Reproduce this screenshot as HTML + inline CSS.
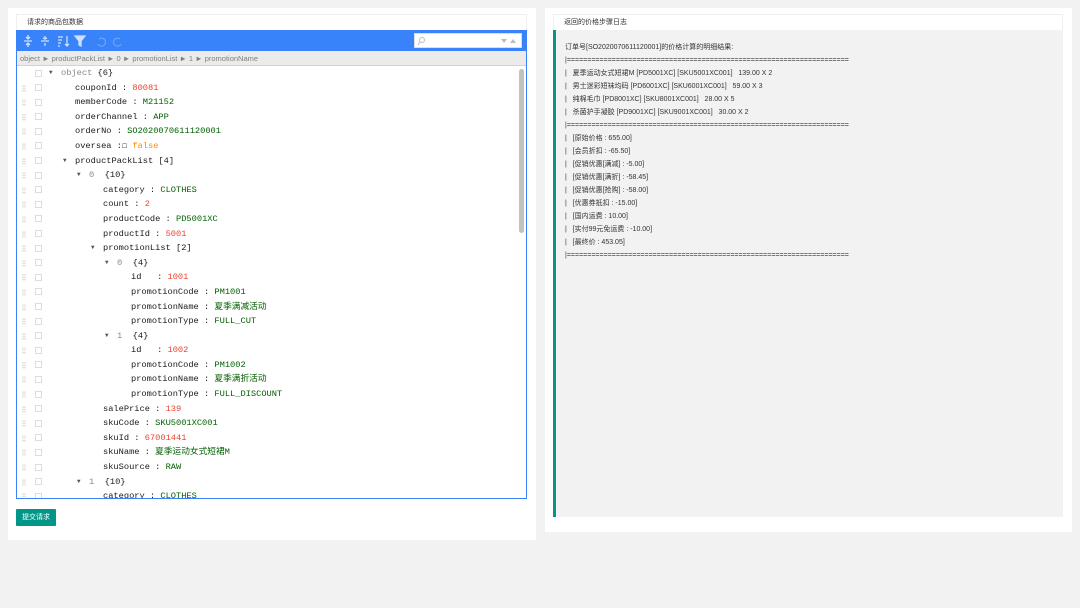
<!DOCTYPE html>
<html><head><meta charset="utf-8"><style>
*{margin:0;padding:0;box-sizing:border-box}
body{width:1080px;height:608px;background:#f2f2f2;font-family:"Liberation Sans","Noto Sans CJK SC",sans-serif;position:relative;overflow:hidden}
.card{position:absolute;background:#fff}
.hd{position:absolute;border:1px solid #eee;border-bottom:none;background:#fff;font-size:7px;color:#333;padding-left:10px;line-height:15px}
.ed{position:absolute;left:16px;top:30px;width:511px;height:469px;border:1px solid #3883fa;overflow:hidden;background:#fff}
.tb{height:20px;background:#3883fa;position:relative}
.bc{height:15px;background:#ebebeb;border-bottom:1px solid #d3d3d3;font-size:7.5px;color:#808080;line-height:15px;padding-left:3px}
.rows{position:relative;font-family:"Liberation Mono","Noto Sans CJK SC",monospace;font-size:8.7px;color:#1a1a1a}
.r{height:14.6px;line-height:14.6px;position:relative;white-space:nowrap}
.r .h{position:absolute;left:5px;top:4px;width:4px;height:7px;background:radial-gradient(circle,#ccc 0.6px,transparent 0.8px) 0 0/2px 2.3px}
.r .c{position:absolute;left:18px;top:3.5px;width:7px;height:7px;border:1px solid #ddd}
.r span.k{position:absolute}
.ar{position:absolute;font-size:6px;color:#555}
.n{color:#ee422e}.s{color:#006000}.b{color:#ff8c00}.g{color:#888}
.sb{position:absolute;right:2px;top:38px;width:5px;height:164px;background:#c1c1c1;border-radius:3px}
.log{position:absolute;left:553px;top:30px;width:510px;height:487px;background:#f2f2f2;border-left:3px solid #009688;font-size:7px;color:#333;padding:11px 0 0 9px}
.log div{height:13px;line-height:13px;white-space:nowrap}
.btn{position:absolute;left:16px;top:509px;width:40px;height:17px;background:#009688;color:#fff;font-size:7px;line-height:17px;text-align:center;border-radius:1px}
</style></head><body>
<div class="card" style="left:8px;top:8px;width:528px;height:532px"></div>
<div class="card" style="left:545px;top:8px;width:527px;height:524px"></div>
<div class="hd" style="left:16px;top:14px;width:511px;height:16px">请求的商品包数据</div>
<div class="hd" style="left:553px;top:14px;width:510px;height:16px">返回的价格步骤日志</div>
<div class="ed">
<div class="tb">
<svg width="110" height="20" style="position:absolute;left:0;top:0" fill="none" stroke="#cfe0fd" stroke-width="1.3">
<path d="M7 10h8M11 4v4M9 6l2 2 2-2M11 16v-4M9 14l2-2 2 2"/>
<path d="M24 10h8M28 5v3M28 15v-3M26 7l2 1 2-1"/>
<path d="M41 6h5M41 9h4M41 12h3M41 15h2M50 5v10M48 13l2 2 2-2"/>
<path d="M58 5h10l-4 5v5l-2-1v-4z" fill="#cfe0fd"/>
<path d="M82 8a4 4 0 1 1-1 5" stroke="#6aa3fb"/><path d="M103 8a4 4 0 1 0 1 5" stroke="#6aa3fb"/>
</svg>
<div style="position:absolute;right:4px;top:2px;width:108px;height:15px;background:#fff;border:1px solid #ddd">
<svg width="108" height="14" style="position:absolute;left:0;top:0"><circle cx="7" cy="6" r="2.5" fill="none" stroke="#bbb"/><path d="M5 8l-2 3" stroke="#bbb"/><path d="M86 5h6l-3 4z M95 9h6l-3-4z" fill="#bbb"/></svg>
</div>
</div>
<div class="bc">object ► productPackList ► 0 ► promotionList ► 1 ► promotionName</div>
<div class="rows">
<div class="r"><i class="c"></i><span class="ar" style="left:32px">▼</span><span class="k" style="left:44px"><span class="g">object</span> {6}</span></div>
<div class="r"><i class="h"></i><i class="c"></i><span class="k" style="left:58px">couponId : <span class="n">80081</span></span></div>
<div class="r"><i class="h"></i><i class="c"></i><span class="k" style="left:58px">memberCode : <span class="s">M21152</span></span></div>
<div class="r"><i class="h"></i><i class="c"></i><span class="k" style="left:58px">orderChannel : <span class="s">APP</span></span></div>
<div class="r"><i class="h"></i><i class="c"></i><span class="k" style="left:58px">orderNo : <span class="s">SO2020070611120001</span></span></div>
<div class="r"><i class="h"></i><i class="c"></i><span class="k" style="left:58px">oversea :☐ <span class="b">false</span></span></div>
<div class="r"><i class="h"></i><i class="c"></i><span class="ar" style="left:46px">▼</span><span class="k" style="left:58px">productPackList [4]</span></div>
<div class="r"><i class="h"></i><i class="c"></i><span class="ar" style="left:60px">▼</span><span class="k" style="left:72px"><span class="g">0</span>&nbsp;&nbsp;{10}</span></div>
<div class="r"><i class="h"></i><i class="c"></i><span class="k" style="left:86px">category : <span class="s">CLOTHES</span></span></div>
<div class="r"><i class="h"></i><i class="c"></i><span class="k" style="left:86px">count : <span class="n">2</span></span></div>
<div class="r"><i class="h"></i><i class="c"></i><span class="k" style="left:86px">productCode : <span class="s">PD5001XC</span></span></div>
<div class="r"><i class="h"></i><i class="c"></i><span class="k" style="left:86px">productId : <span class="n">5001</span></span></div>
<div class="r"><i class="h"></i><i class="c"></i><span class="ar" style="left:74px">▼</span><span class="k" style="left:86px">promotionList [2]</span></div>
<div class="r"><i class="h"></i><i class="c"></i><span class="ar" style="left:88px">▼</span><span class="k" style="left:100px"><span class="g">0</span>&nbsp;&nbsp;{4}</span></div>
<div class="r"><i class="h"></i><i class="c"></i><span class="k" style="left:114px">id&nbsp;&nbsp;&nbsp;: <span class="n">1001</span></span></div>
<div class="r"><i class="h"></i><i class="c"></i><span class="k" style="left:114px">promotionCode : <span class="s">PM1001</span></span></div>
<div class="r"><i class="h"></i><i class="c"></i><span class="k" style="left:114px">promotionName : <span class="s">夏季满减活动</span></span></div>
<div class="r"><i class="h"></i><i class="c"></i><span class="k" style="left:114px">promotionType : <span class="s">FULL_CUT</span></span></div>
<div class="r"><i class="h"></i><i class="c"></i><span class="ar" style="left:88px">▼</span><span class="k" style="left:100px"><span class="g">1</span>&nbsp;&nbsp;{4}</span></div>
<div class="r"><i class="h"></i><i class="c"></i><span class="k" style="left:114px">id&nbsp;&nbsp;&nbsp;: <span class="n">1002</span></span></div>
<div class="r"><i class="h"></i><i class="c"></i><span class="k" style="left:114px">promotionCode : <span class="s">PM1002</span></span></div>
<div class="r"><i class="h"></i><i class="c"></i><span class="k" style="left:114px">promotionName : <span class="s">夏季满折活动</span></span></div>
<div class="r"><i class="h"></i><i class="c"></i><span class="k" style="left:114px">promotionType : <span class="s">FULL_DISCOUNT</span></span></div>
<div class="r"><i class="h"></i><i class="c"></i><span class="k" style="left:86px">salePrice : <span class="n">139</span></span></div>
<div class="r"><i class="h"></i><i class="c"></i><span class="k" style="left:86px">skuCode : <span class="s">SKU5001XC001</span></span></div>
<div class="r"><i class="h"></i><i class="c"></i><span class="k" style="left:86px">skuId : <span class="n">67001441</span></span></div>
<div class="r"><i class="h"></i><i class="c"></i><span class="k" style="left:86px">skuName : <span class="s">夏季运动女式短裙M</span></span></div>
<div class="r"><i class="h"></i><i class="c"></i><span class="k" style="left:86px">skuSource : <span class="s">RAW</span></span></div>
<div class="r"><i class="h"></i><i class="c"></i><span class="ar" style="left:60px">▼</span><span class="k" style="left:72px"><span class="g">1</span>&nbsp;&nbsp;{10}</span></div>
<div class="r"><i class="h"></i><i class="c"></i><span class="k" style="left:86px">category : <span class="s">CLOTHES</span></span></div>
</div>
<div class="sb"></div>
</div>
<div class="btn">提交请求</div>
<div class="log">
<div>订单号[SO2020070611120001]的价格计算的明细结果:</div>
<div>|=====================================================================</div>
<div>|&nbsp;&nbsp; 夏季运动女式短裙M [PD5001XC] [SKU5001XC001]&nbsp;&nbsp; 139.00 X 2</div>
<div>|&nbsp;&nbsp; 男士迷彩短袜均码 [PD6001XC] [SKU6001XC001]&nbsp;&nbsp; 59.00 X 3</div>
<div>|&nbsp;&nbsp; 纯棉毛巾 [PD8001XC] [SKU8001XC001]&nbsp;&nbsp; 28.00 X 5</div>
<div>|&nbsp;&nbsp; 杀菌护手凝胶 [PD9001XC] [SKU9001XC001]&nbsp;&nbsp; 30.00 X 2</div>
<div>|=====================================================================</div>
<div>|&nbsp;&nbsp; [原始价格 : 655.00]</div>
<div>|&nbsp;&nbsp; [会员折扣 : -65.50]</div>
<div>|&nbsp;&nbsp; [促销优惠[满减] : -5.00]</div>
<div>|&nbsp;&nbsp; [促销优惠[满折] : -58.45]</div>
<div>|&nbsp;&nbsp; [促销优惠[抢购] : -58.00]</div>
<div>|&nbsp;&nbsp; [优惠券抵扣 : -15.00]</div>
<div>|&nbsp;&nbsp; [国内运费 : 10.00]</div>
<div>|&nbsp;&nbsp; [实付99元免运费 : -10.00]</div>
<div>|&nbsp;&nbsp; [最终价 : 453.05]</div>
<div>|=====================================================================</div>
</div>
</body></html>
